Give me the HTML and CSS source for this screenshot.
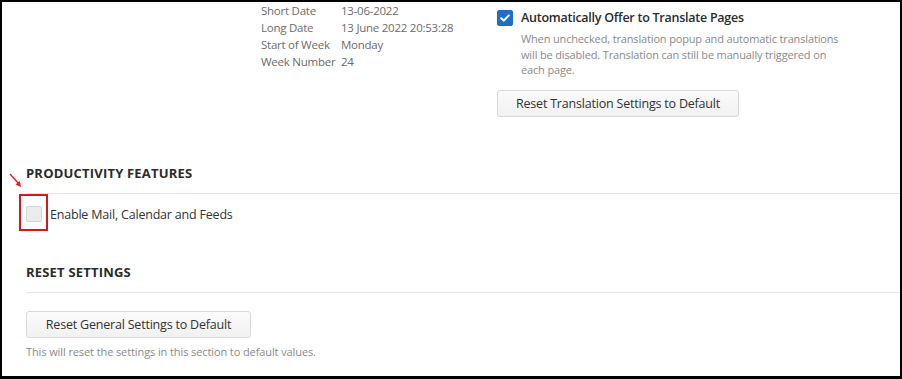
FILE: index.html
```html
<!DOCTYPE html>
<html lang="en">
<head>
  <meta charset="UTF-8">
  <title>Settings</title>
  <link rel="stylesheet" href="styles.css">
</head>
<body>
  <div class="frame">
    <div class="top-row">
      <table class="dates">
        <tr><td>Short Date</td><td>13-06-2022</td></tr>
        <tr><td>Long Date</td><td>13 June 2022 20:53:28</td></tr>
        <tr><td>Start of Week</td><td>Monday</td></tr>
        <tr><td>Week Number</td><td>24</td></tr>
      </table>

      <div class="translate">
        <label class="check-row">
          <span class="box checked">
            <svg width="12" height="12" viewBox="0 0 12 12"><path d="M2.2 6.2 L4.8 8.6 L9.8 3.4" fill="none" stroke="#fff" stroke-width="2" stroke-linecap="round" stroke-linejoin="round"/></svg>
          </span>
          <span class="check-label strong">Automatically Offer to Translate Pages</span>
        </label>
        <p class="hint lines">When unchecked, translation popup and automatic translations<br>will be disabled. Translation can still be manually triggered on<br>each page.</p>
        <button class="btn">Reset Translation Settings to Default</button>
      </div>
    </div>

    <section class="group productivity">
      <h2>Productivity Features</h2>
      <div class="check-row mail">
        <span class="marker">
          <svg class="arrow" width="14" height="16" viewBox="0 0 14 16"><path d="M1 1 L10 11" stroke="#e0201e" stroke-width="1.4"/><path d="M6.5 11.5 L12 14 L10.8 8 Z" fill="#e0201e"/></svg>
          <span class="box"></span>
        </span>
        <span class="check-label">Enable Mail, Calendar and Feeds</span>
      </div>
    </section>

    <section class="group reset">
      <h2>Reset Settings</h2>
      <button class="btn">Reset General Settings to Default</button>
      <p class="hint">This will reset the settings in this section to default values.</p>
    </section>
  </div>
</body>
</html>
```

FILE: styles.css
```css
html, body { margin: 0; }
body {
  font-family: "Open Sans", "Noto Sans", sans-serif;
  color: #333;
  background: #000;
}
.frame {
  box-sizing: border-box;
  width: 898px;
  height: 374px;
  margin: 2px 2px 3px 2px;
  background: #fff;
  overflow: hidden;
}
.top-row {
  display: flex;
  padding-left: 259px;
}
.dates {
  border-collapse: collapse;
  width: 236px;
  align-self: flex-start;
  font-size: 11.5px;
  letter-spacing: -0.25px;
  color: #6b6b6b;
}
.dates td { padding: 0; line-height: 17px; white-space: nowrap; }
.dates td:first-child { width: 80px; }

.translate { width: 360px; padding-top: 7px; }
.check-row { display: flex; align-items: center; gap: 8px; }
.box {
  box-sizing: border-box;
  width: 16px;
  height: 16px;
  border: 1px solid #d4d4d4;
  border-radius: 2px;
  background: #ececec;
  display: flex;
  align-items: center;
  justify-content: center;
  flex: none;
}
.box.checked { background: #1f6fc5; border-color: #1f6fc5; }
.check-label { font-size: 12.5px; letter-spacing: -0.2px; }
.check-label.strong { font-weight: 600; color: #2b2b2b; letter-spacing: -0.25px; }
.hint {
  margin: 5px 0 0 24px;
  font-size: 11px;
  letter-spacing: -0.15px;
  line-height: 15.5px;
  color: #8a8a8a;
}
.hint.lines { white-space: nowrap; }
.btn {
  display: block;
  font-family: inherit;
  font-size: 12.5px;
  letter-spacing: -0.2px;
  color: #333;
  height: 27px;
  padding: 0;
  border: 1px solid #d9d9d9;
  border-radius: 3px;
  background: linear-gradient(#fbfbfb, #f1f1f1);
}
.translate .btn { margin-top: 12px; width: 242px; }

.group { padding-left: 24px; }
.group h2 {
  margin: 0;
  font-size: 13px;
  font-weight: 700;
  letter-spacing: 0.2px;
  text-transform: uppercase;
  color: #2b2b2b;
  line-height: 18px;
  padding-bottom: 11px;
  border-bottom: 1px solid #e6e6e6;
}
.productivity { margin-top: 47px; }
.mail { margin-top: 12px; gap: 8px; }
.marker {
  position: relative;
  display: flex;
}
.marker::after {
  content: "";
  position: absolute;
  left: -7px;
  top: -12px;
  width: 25px;
  height: 33px;
  border: 2px solid #d3181c;
}
.arrow { position: absolute; left: -17px; top: -33px; }

.reset { margin-top: 40px; }
.reset .btn { margin-top: 18px; width: 225px; }
.reset .hint { margin: 6px 0 0 0; font-size: 11px; letter-spacing: -0.1px; }
```
